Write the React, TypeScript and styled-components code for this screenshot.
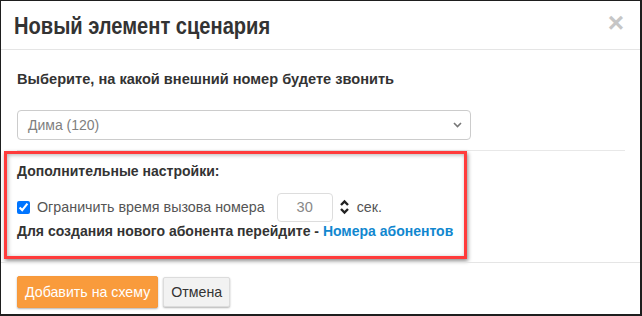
import { FC } from 'react';
import styled, { createGlobalStyle } from 'styled-components';

const GlobalStyle = createGlobalStyle`
  html, body {
    margin: 0;
    padding: 0;
    background: #ffffff;
  }
  body {
    font-family: "Liberation Sans", Arial, sans-serif;
    color: #333333;
  }
`;

const Dialog = styled.div`
  box-sizing: border-box;
  width: 642px;
  height: 316px;
  border: 1px solid #1e1e1e;
  border-right-width: 2px;
  border-bottom-width: 2px;
  background: #ffffff;
  display: flex;
  flex-direction: column;
  overflow: hidden;
`;

const Header = styled.div`
  height: 48px;
  border-bottom: 1px solid #e5e5e5;
  display: flex;
  align-items: center;
  justify-content: space-between;
  padding: 0 16px 0 13px;
`;

// the original title font is a condensed face; squeeze the regular one to match
const Title = styled.h4`
  margin: 2px 0 0;
  font-size: 24.5px;
  font-weight: 700;
  line-height: 26px;
  color: #333333;
  transform: scaleX(0.82);
  transform-origin: left center;
  white-space: nowrap;
`;

const Close = styled.button`
  border: 0;
  background: transparent;
  padding: 0;
  margin-top: -5px;
  font-family: "Liberation Sans", Arial, sans-serif;
  font-size: 28px;
  font-weight: 700;
  line-height: 20px;
  color: #c6c6c6;
  cursor: pointer;
`;

const Body = styled.div`
  padding: 0 15px 0 16px;
  display: flex;
  flex-direction: column;
`;

const Label = styled.div`
  margin-top: 20px;
  font-size: 14.6px;
  font-weight: 700;
  line-height: 18px;
  color: #333333;
`;

const SelectBox = styled.div`
  box-sizing: border-box;
  margin-top: 22px;
  width: 454px;
  height: 30px;
  border: 1px solid #cccccc;
  border-radius: 4px;
  display: flex;
  align-items: center;
  justify-content: space-between;
  padding: 0 8px 0 10px;
  font-size: 14px;
  color: #808080;
`;

const Rule = styled.div`
  margin-top: 10px;
  height: 1px;
  background: #e8e8e8;
`;

const Highlight = styled.div`
  box-sizing: border-box;
  margin-left: -13px;
  width: 463px;
  height: 108px;
  border: 3px solid #ff3b3b;
  box-shadow: 1px 2px 4px rgba(0, 0, 0, 0.45),
    inset 1px 1px 4px rgba(0, 0, 0, 0.3);
  padding: 8px 0 0 10px;
  display: flex;
  flex-direction: column;
`;

const SectionTitle = styled.div`
  font-size: 14px;
  font-weight: 700;
  line-height: 18px;
  color: #333333;
`;

const LimitRow = styled.div`
  margin-top: 12px;
  height: 30px;
  display: flex;
  align-items: center;
  font-size: 14.3px;
  color: #555555;
`;

const Check = styled.input`
  margin: 0 7px 0 0;
  width: 13px;
  height: 13px;
  accent-color: #0075ff;
`;

const Seconds = styled.div`
  box-sizing: border-box;
  margin-left: 12px;
  width: 56px;
  height: 29px;
  border: 1px solid #dddddd;
  border-radius: 4px;
  display: flex;
  align-items: center;
  justify-content: center;
  font-size: 14.6px;
  color: #888888;
`;

const Spin = styled.svg`
  margin-left: 6px;
  flex: none;
`;

const Unit = styled.span`
  margin-left: 7px;
`;

const Hint = styled.div`
  font-size: 14px;
  font-weight: 700;
  line-height: 18px;
  color: #333333;
`;

const Link = styled.a`
  color: #1187cf;
  text-decoration: none;
`;

const Footer = styled.div`
  margin-top: 3px;
  border-top: 1px solid #e5e5e5;
  padding: 13px 16px 0;
  display: flex;
  align-items: center;
  gap: 5px;
`;

const Button = styled.button<{ primary?: boolean }>`
  box-sizing: border-box;
  height: ${({ primary }) => (primary ? '32px' : '30px')};
  padding: 0 7px;
  border: 1px solid ${({ primary }) => (primary ? '#f7993b' : '#dcdcdc')};
  border-radius: 2px;
  background: ${({ primary }) => (primary ? '#f99b3c' : '#f2f2f2')};
  color: ${({ primary }) => (primary ? '#ffffff' : '#333333')};
  font-family: "Liberation Sans", Arial, sans-serif;
  font-size: 14.2px;
  box-shadow: 0 1px 2px rgba(0, 0, 0, 0.3);
  cursor: pointer;
`;

const App: FC = () => (
  <>
    <GlobalStyle />
    <Dialog>
      <Header>
        <Title>Новый элемент сценария</Title>
        <Close aria-label="Закрыть">×</Close>
      </Header>
      <Body>
        <Label>Выберите, на какой внешний номер будете звонить</Label>
        <SelectBox>
          <span>Дима (120)</span>
          <svg width="9" height="6" viewBox="0 0 9 6">
            <path d="M1 1l3.5 3.5L8 1" fill="none" stroke="#777" strokeWidth="1.6" />
          </svg>
        </SelectBox>
        <Rule />
        <Highlight>
          <SectionTitle>Дополнительные настройки:</SectionTitle>
          <LimitRow>
            <Check type="checkbox" checked readOnly />
            <span>Ограничить время вызова номера</span>
            <Seconds>30</Seconds>
            <Spin width="11" height="16" viewBox="0 0 11 16">
              <path d="M2 6l3.5-3.5L9 6M2 10l3.5 3.5L9 10" fill="none" stroke="#222" strokeWidth="2.4" />
            </Spin>
            <Unit>сек.</Unit>
          </LimitRow>
          <Hint>
            Для создания нового абонента перейдите - <Link href="#">Номера абонентов</Link>
          </Hint>
        </Highlight>
      </Body>
      <Footer>
        <Button primary>Добавить на схему</Button>
        <Button>Отмена</Button>
      </Footer>
    </Dialog>
  </>
);

export default App;
